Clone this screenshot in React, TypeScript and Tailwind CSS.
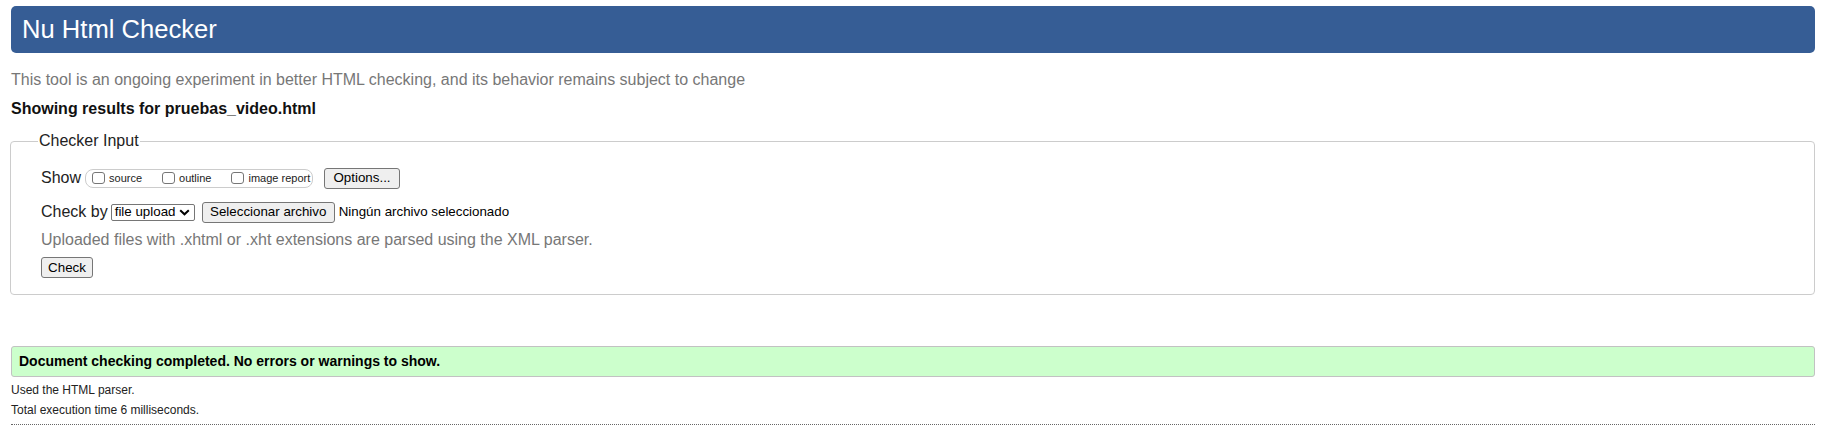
import React from 'react';

const Btn = ({ children, className = '' }: { children: React.ReactNode; className?: string }) => (
  <button
    type="button"
    className={`h-[21px] flex items-center justify-center whitespace-nowrap bg-[#efefef] border border-[#767676] rounded-[3px] text-[13.33px] leading-none text-black ${className}`}
  >
    {children}
  </button>
);

const Check = ({ label }: { label: string }) => (
  <label className="flex items-center whitespace-nowrap">
    <span className="w-[13px] h-[12px] border border-[#767676] rounded-[3px] bg-white mr-[4px]" />
    <span className="text-[11px] leading-none text-[#222]">{label}</span>
  </label>
);

export default function App() {
  return (
    <div className="w-[1834px] h-[434px] bg-white pl-[11px] pr-[19px] pt-[6px] font-['Liberation_Sans',Arial,sans-serif] text-[#222]">
      {/* cabecera */}
      <div className="h-[47px] bg-[#365d95] rounded-[5px] flex items-center px-[11px]">
        <h1 className="text-white text-[25.6px] leading-none">Nu Html Checker</h1>
      </div>

      <p className="mt-[18px] text-[16px] leading-[18px] text-[#777]">
        This tool is an ongoing experiment in better HTML checking, and its behavior remains subject to change
      </p>
      <h2 className="mt-[11px] text-[16px] leading-[18px] font-bold text-[#111]">
        Showing results for pruebas_video.html
      </h2>

      <fieldset className="mt-[14px] -ml-[1px] border border-[#ccc] rounded-[4px] pl-[30px] pb-[15px] h-[163px]">
        <legend className="px-[1px] ml-[-3px] text-[16px] leading-[18px] text-[#222]">Checker Input</legend>

        <div className="flex items-center h-[20px] mt-[18px]">
          <span className="text-[16px] leading-none mr-[4px]">Show</span>
          <div className="flex items-center h-[19px] w-[228px] border border-[#ccc] rounded-[8px] pl-[6px] gap-[20px]">
            <Check label="source" />
            <Check label="outline" />
            <Check label="image report" />
          </div>
          <Btn className="ml-[11px] w-[76px]">Options...</Btn>
        </div>

        <div className="flex items-center h-[20px] mt-[14px]">
          <span className="text-[16px] leading-none mr-[3px]">Check by</span>
          <div className="flex items-center justify-between h-[17px] w-[84px] border border-[#767676] rounded-[2px] pl-[3px] pr-[4px] bg-white">
            <span className="text-[13.33px] leading-none text-black whitespace-nowrap">file upload</span>
            <svg width="11" height="7" viewBox="0 0 11 7">
              <path d="M1.2 1.2 L5.5 5.3 L9.8 1.2" stroke="#000" strokeWidth="2" fill="none" />
            </svg>
          </div>
          <Btn className="ml-[7px] w-[133px]">Seleccionar archivo</Btn>
          <span className="ml-[4px] text-[13.33px] text-black whitespace-nowrap">Ningún archivo seleccionado</span>
        </div>

        <p className="mt-[9px] text-[16px] leading-[18px] text-[#777]">
          Uploaded files with .xhtml or .xht extensions are parsed using the XML parser.
        </p>

        <Btn className="mt-[8px] w-[52px]">Check</Btn>
      </fieldset>

      <div className="mt-[51px] h-[31px] bg-[#ccffcc] border border-[#c2c2c2] rounded-[3px] flex items-center px-[7px]">
        <p className="text-[14px] font-bold text-black">Document checking completed. No errors or warnings to show.</p>
      </div>

      <p className="mt-[6px] text-[12px] leading-[14px] text-[#222]">Used the HTML parser.</p>
      <p className="mt-[6px] text-[12px] leading-[14px] text-[#222]">Total execution time 6 milliseconds.</p>
      <div className="mt-[7px] border-t border-dotted border-[#666]" />
    </div>
  );
}
